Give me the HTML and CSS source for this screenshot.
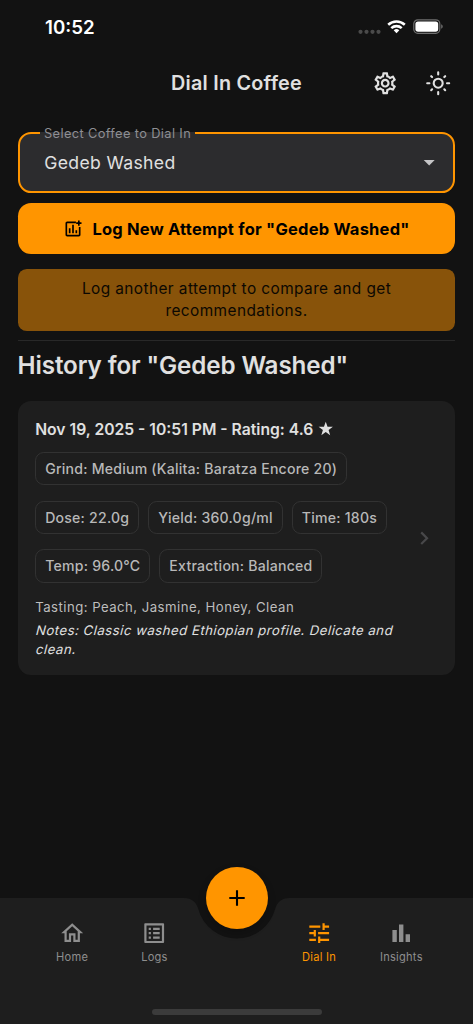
FILE: index.html
```html
<!DOCTYPE html>
<html lang="en">
<head>
<meta charset="utf-8">
<title>Dial In Coffee</title>
<link rel="stylesheet" href="styles.css">
</head>
<body>
<div class="screen">
  <div class="status">
    <span class="clock">10:52</span>
    <svg class="status-icons" width="90" height="24" viewBox="0 0 90 24">
      <g fill="#4a4a4a"><circle cx="5.5" cy="16.8" r="2.1"/><circle cx="11.5" cy="16.8" r="2.1"/><circle cx="17.5" cy="16.8" r="2.1"/><circle cx="23.5" cy="16.8" r="2.1"/></g>
      <g fill="none" stroke="#fff" stroke-width="2.6"><path d="M33.2 9.7a12.4 12.4 0 0 1 16.6 0"/><path d="M36.3 13.1a7.8 7.8 0 0 1 10.4 0"/></g>
      <path fill="#fff" d="M41.5 18.2l-2.8-2.9a4.2 4.2 0 0 1 5.6 0z"/>
      <rect x="58.8" y="4.8" width="26" height="13.5" rx="4" fill="none" stroke="#6f6f6f" stroke-width="1.2"/>
      <rect x="60.4" y="6.4" width="22.8" height="10.3" rx="2.6" fill="#fff"/>
      <path fill="#6f6f6f" d="M86.2 9.3c2 .8 2 3.700 0 4.500z"/>
    </svg>
  </div>
  <header class="appbar">
    <h1 class="title">Dial In Coffee</h1>
    <div class="actions">
      <svg class="icon" viewBox="0 0 24 24"><path d="M19.43 12.98c.04-.32.07-.64.07-.98 0-.34-.03-.66-.07-.98l2.11-1.65c.19-.15.24-.42.12-.64l-2-3.46c-.09-.16-.26-.25-.44-.25-.06 0-.12.01-.17.03l-2.49 1c-.52-.4-1.08-.73-1.69-.98l-.38-2.65C14.46 2.180 14.250 2 14 2h-4c-.25 0-.46.18-.49.42l-.38 2.650c-.61.25-1.170.59-1.690.98l-2.490-1c-.06-.02-.12-.03-.18-.03-.17 0-.34.09-.43.25l-2 3.460c-.13.22-.07.49.12.64l2.110 1.650c-.04.32-.07.65-.07.98 0 .33.03.66.07.98l-2.110 1.650c-.19.15-.24.42-.12.64l2 3.460c.09.16.26.25.44.25.06 0 .12-.01.17-.03l2.490-1c.52.4 1.080.73 1.690.98l.38 2.650c.03.24.24.42.49.42h4c.25 0 .46-.18.49-.42l.38-2.650c.61-.25 1.170-.59 1.690-.98l2.490 1c.06.02.12.03.18.03.17 0 .34-.09.43-.25l2-3.460c.12-.22.07-.49-.12-.64l-2.110-1.650zm-1.980-1.710c.04.31.05.52.05.73 0 .21-.02.43-.05.73l-.14 1.130.89.7 1.080.84-.7 1.210-1.270-.51-1.040-.42-.9.68c-.43.32-.84.56-1.250.73l-1.060.43-.16 1.130-.2 1.350h-1.400l-.19-1.350-.16-1.130-1.060-.43c-.43-.18-.83-.41-1.230-.71l-.91-.7-1.060.43-1.270.51-.7-1.210 1.080-.84.89-.7-.14-1.130c-.03-.31-.05-.54-.05-.74s.02-.43.05-.73l.14-1.130-.89-.7-1.080-.84.7-1.210 1.270.51 1.040.42.9-.68c.43-.32.84-.56 1.250-.73l1.060-.43.16-1.130.2-1.350h1.390l.19 1.350.16 1.130 1.060.43c.43.18.83.41 1.230.71l.91.7 1.060-.43 1.270-.51.7 1.210-1.070.85-.89.7.14 1.130zM12 8c-2.210 0-4 1.790-4 4s1.790 4 4 4 4-1.790 4-4-1.790-4-4-4zm0 6c-1.100 0-2-.9-2-2s.9-2 2-2 2 .9 2 2-.9 2-2 2z"/></svg>
      <svg class="icon sun" viewBox="-13.200 -13.200 26.400 26.400"><circle r="4.500"/><path d="M0-11v2.200M0 11V8.800M-11 0h2.200M11 0H8.800M-7-7l.9.9M7-7l-.9.9M-7 7l.9-.9M7 7l-.9-.9"/></svg>
    </div>
  </header>
  <main class="content">
    <div class="select">
      <span class="select-label">Select Coffee to Dial In</span>
      <span class="select-value">Gedeb Washed</span>
      <svg class="icon caret" viewBox="0 0 24 24"><path d="M7 10l5 5 5-5z"/></svg>
    </div>
    <div class="primary">
      <svg class="chart" viewBox="0 0 24 24"><path d="M15.500 3H5c-1.100 0-2 .9-2 2v14c0 1.100.9 2 2 2h14c1.100 0 2-.9 2-2V9.500h-2V19H5V5h10.500zM7 11h2v6H7zm4-4h2v10h-2zm4 6.500h2V17h-2zM18 1.800h2V4h2.200v2H20v2.200h-2V6h-2.200V4H18z"/></svg>
      <span class="primary-text">Log New Attempt for "Gedeb Washed"</span>
    </div>
    <p class="hint">Log another attempt to compare and get<br>recommendations.</p>
    <hr class="rule">
    <h2 class="heading">History for "Gedeb Washed"</h2>
    <article class="card">
      <div class="card-body">
        <h3 class="entry">Nov 19, 2025 - 10:51 PM - Rating: 4.6 <svg class="star" viewBox="0 0 16 16"><path d="M8 .7l1.850 5.200h5.500l-4.400 3.300 1.600 5.400L8 11.400l-4.550 3.200 1.600-5.400-4.400-3.300h5.500z"/></svg></h3>
        <div class="chips">
          <span class="chip">Grind: Medium (Kalita: Baratza Encore 20)</span>
          <span class="chip">Dose: 22.0g</span>
          <span class="chip">Yield: 360.0g/ml</span>
          <span class="chip">Time: 180s</span>
          <span class="chip">Temp: 96.0°C</span>
          <span class="chip">Extraction: Balanced</span>
        </div>
        <p class="tasting">Tasting: Peach, Jasmine, Honey, Clean</p>
        <p class="notes"><span>Notes: Classic washed Ethiopian profile. Delicate and</span> <span>clean.</span></p>
      </div>
      <svg class="icon chevron" viewBox="0 0 24 24"><path d="M10 6L8.590 7.410 13.170 12l-4.580 4.590L10 18l6-6z"/></svg>
    </article>
  </main>
  <footer class="nav">
    <svg class="nav-bg" width="473" height="126" viewBox="0 0 473 126"><path d="M0 0H184C192 0 196 4 198.300 11A39.700 39.700 0 0 0 275.100 11C277.400 4 281.400 0 289.400 0H473V126H0z"/></svg>
    <div class="fab"><svg width="20" height="20" viewBox="0 0 20 20"><path d="M10 2.300v15.400M2.300 10h15.400"/></svg></div>
    <nav class="tabs">
      <div class="tab"><svg class="icon" viewBox="0 0 24 24"><path d="M12 5.690l5 4.500V18h-2v-6H9v6H7v-7.810l5-4.500M12 3L2 12h3v8h6v-6h2v6h6v-8h3z"/></svg><span>Home</span></div>
      <div class="tab"><svg class="icon" viewBox="0 0 24 24"><path d="M19 5v14H5V5h14m1.100-2H3.900c-.5 0-.9.4-.9.9v16.200c0 .4.4.9.9.9h16.200c.4 0 .9-.5.9-.9V3.900c0-.5-.5-.9-.9-.9zM11 7h6v2h-6V7zm0 4h6v2h-6v-2zm0 4h6v2h-6zM7 7h2v2H7zm0 4h2v2H7zm0 4h2v2H7z"/></svg><span>Logs</span></div>
      <div class="tab"></div>
      <div class="tab active"><svg class="icon" viewBox="0 0 24 24"><path d="M3 17v2h6v-2H3zM3 5v2h10V5H3zm10 16v-2h8v-2h-8v-2h-2v6h2zM7 9v2H3v2h4v2h2V9H7zm14 4v-2H11v2h10zm-6-4h2V7h4V5h-4V3h-2v6z"/></svg><span>Dial In</span></div>
      <div class="tab"><svg class="icon" viewBox="0 0 24 24"><path d="M4 9h4v11H4zm12 4h4v7h-4zm-6-9h4v16h-4z"/></svg><span>Insights</span></div>
    </nav>
    <div class="indicator"></div>
  </footer>
</div>
</body>
</html>
```
FILE: styles.css
```css
* { box-sizing: border-box; margin: 0; padding: 0; }
body { background: #121212; font-family: Inter, sans-serif; color: #e0e0e0; }
.screen { width: 473px; height: 1024px; display: flex; flex-direction: column; overflow: hidden; }
.icon { width: 26.4px; height: 26.4px; fill: currentColor; display: block; flex: none; }

.status { height: 55px; display: flex; justify-content: space-between; padding: 15px 28.2px 0 45px; }
.clock { margin-top: 1px; font-size: 18.7px; font-weight: 600; line-height: 24px; color: #fff; }
.status-icons { display: block; }

.appbar { height: 56px; display: grid; grid-template-columns: 1fr auto 1fr; align-items: center; }
.title { grid-column: 2; font-size: 19.8px; font-weight: 600; letter-spacing: 0.24px; white-space: nowrap; }
.actions { display: flex; justify-content: flex-end; gap: 26.8px; padding-right: 21.8px; }
.sun { fill: none; stroke: currentColor; stroke-width: 2.1; stroke-linecap: round; }

.content { flex: 1; padding: 21px 17.6px 0; display: flex; flex-direction: column; }
.select { position: relative; height: 61.3px; display: flex; align-items: center; justify-content: space-between; padding: 0 11px 0 24.6px; background: #2c2c2e; border: 2.2px solid #ff9500; border-radius: 13.2px; }
.select-label { position: absolute; left: 20.4px; top: -8px; height: 15px; line-height: 15px; padding: 0 4px; font-size: 12.8px; letter-spacing: 0.38px; color: #8e8e93; background: linear-gradient(#121212 0 6px, #2c2c2e 6px); white-space: nowrap; }
.select-value { font-size: 17.6px; letter-spacing: 0.35px; }
.caret { color: #c5c5c7; }
.primary { height: 50.7px; margin-top: 10px; padding-top: 1px; display: flex; align-items: center; justify-content: center; gap: 9px; border-radius: 13.2px; background: #ff9500; color: #000; }
.chart { width: 20px; height: 20px; fill: currentColor; }
.primary-text { font-size: 16.5px; font-weight: 700; letter-spacing: 0.22px; white-space: nowrap; }
.hint { height: 62px; margin-top: 14.6px; padding-top: 9px; border-radius: 8.8px; background: #88530a; color: #0c0802; text-align: center; font-size: 15.4px; line-height: 22px; letter-spacing: 0.42px; }
.rule { border: 0; height: 1px; margin-top: 9.4px; background: #282828; }
.heading { margin-top: 9px; font-size: 24.2px; font-weight: 600; line-height: 31px; letter-spacing: -0.11px; white-space: nowrap; }

.card { height: 274px; margin-top: 20px; padding: 18px 17.6px 17px; display: flex; align-items: center; border-radius: 13.2px; background: #1e1e1e; }
.card-body { width: 368px; align-self: flex-start; }
.entry { font-size: 15.7px; font-weight: 600; line-height: 22px; white-space: nowrap; }
.star { width: 15.5px; height: 15.5px; margin-left: 0.7px; fill: currentColor; vertical-align: -1.5px; }
.chips { display: flex; flex-wrap: wrap; gap: 15.5px 9px; margin-top: 11px; }
.chip { height: 33.2px; line-height: 31px; padding: 0 9px; border: 1.1px solid #323232; border-radius: 8.8px; font-size: 14.1px; font-weight: 500; letter-spacing: 0.22px; color: #b8b8b8; white-space: nowrap; }
.tasting { margin-top: 15.6px; font-size: 13.2px; line-height: 19px; letter-spacing: 0.46px; color: #bdbdbd; }
.notes { margin-top: 4px; font-size: 13.2px; line-height: 19px; letter-spacing: 0.49px; white-space: nowrap; }
.notes span { display: block; width: max-content; transform: skewX(-14deg); transform-origin: 0 14px; }
.chevron { color: #48484a; margin-left: 8px; }

.nav { position: relative; height: 126px; flex: none; }
.nav-bg { position: absolute; left: 0; top: 0; fill: #1e1e1e; }
.fab { position: absolute; left: 205.6px; top: -31px; width: 62px; height: 62px; border-radius: 50%; background: #ff9500; display: flex; align-items: center; justify-content: center; box-shadow: 0 4px 8px rgba(0,0,0,0.2); }
.fab path { stroke: #000; stroke-width: 2.1; }
.tabs { position: relative; display: flex; padding: 21.5px 0 0 31px; color: #8e8e8e; }
.tab { width: 82.3px; display: flex; flex-direction: column; align-items: center; font-size: 11.1px; line-height: 16px; letter-spacing: 0.25px; }
.tab span { margin-top: 3px; }
.active { color: #ff9500; }
.indicator { position: absolute; left: 152px; bottom: 9px; width: 169.5px; height: 5.7px; border-radius: 3px; background: #3b3b3b; }
```
